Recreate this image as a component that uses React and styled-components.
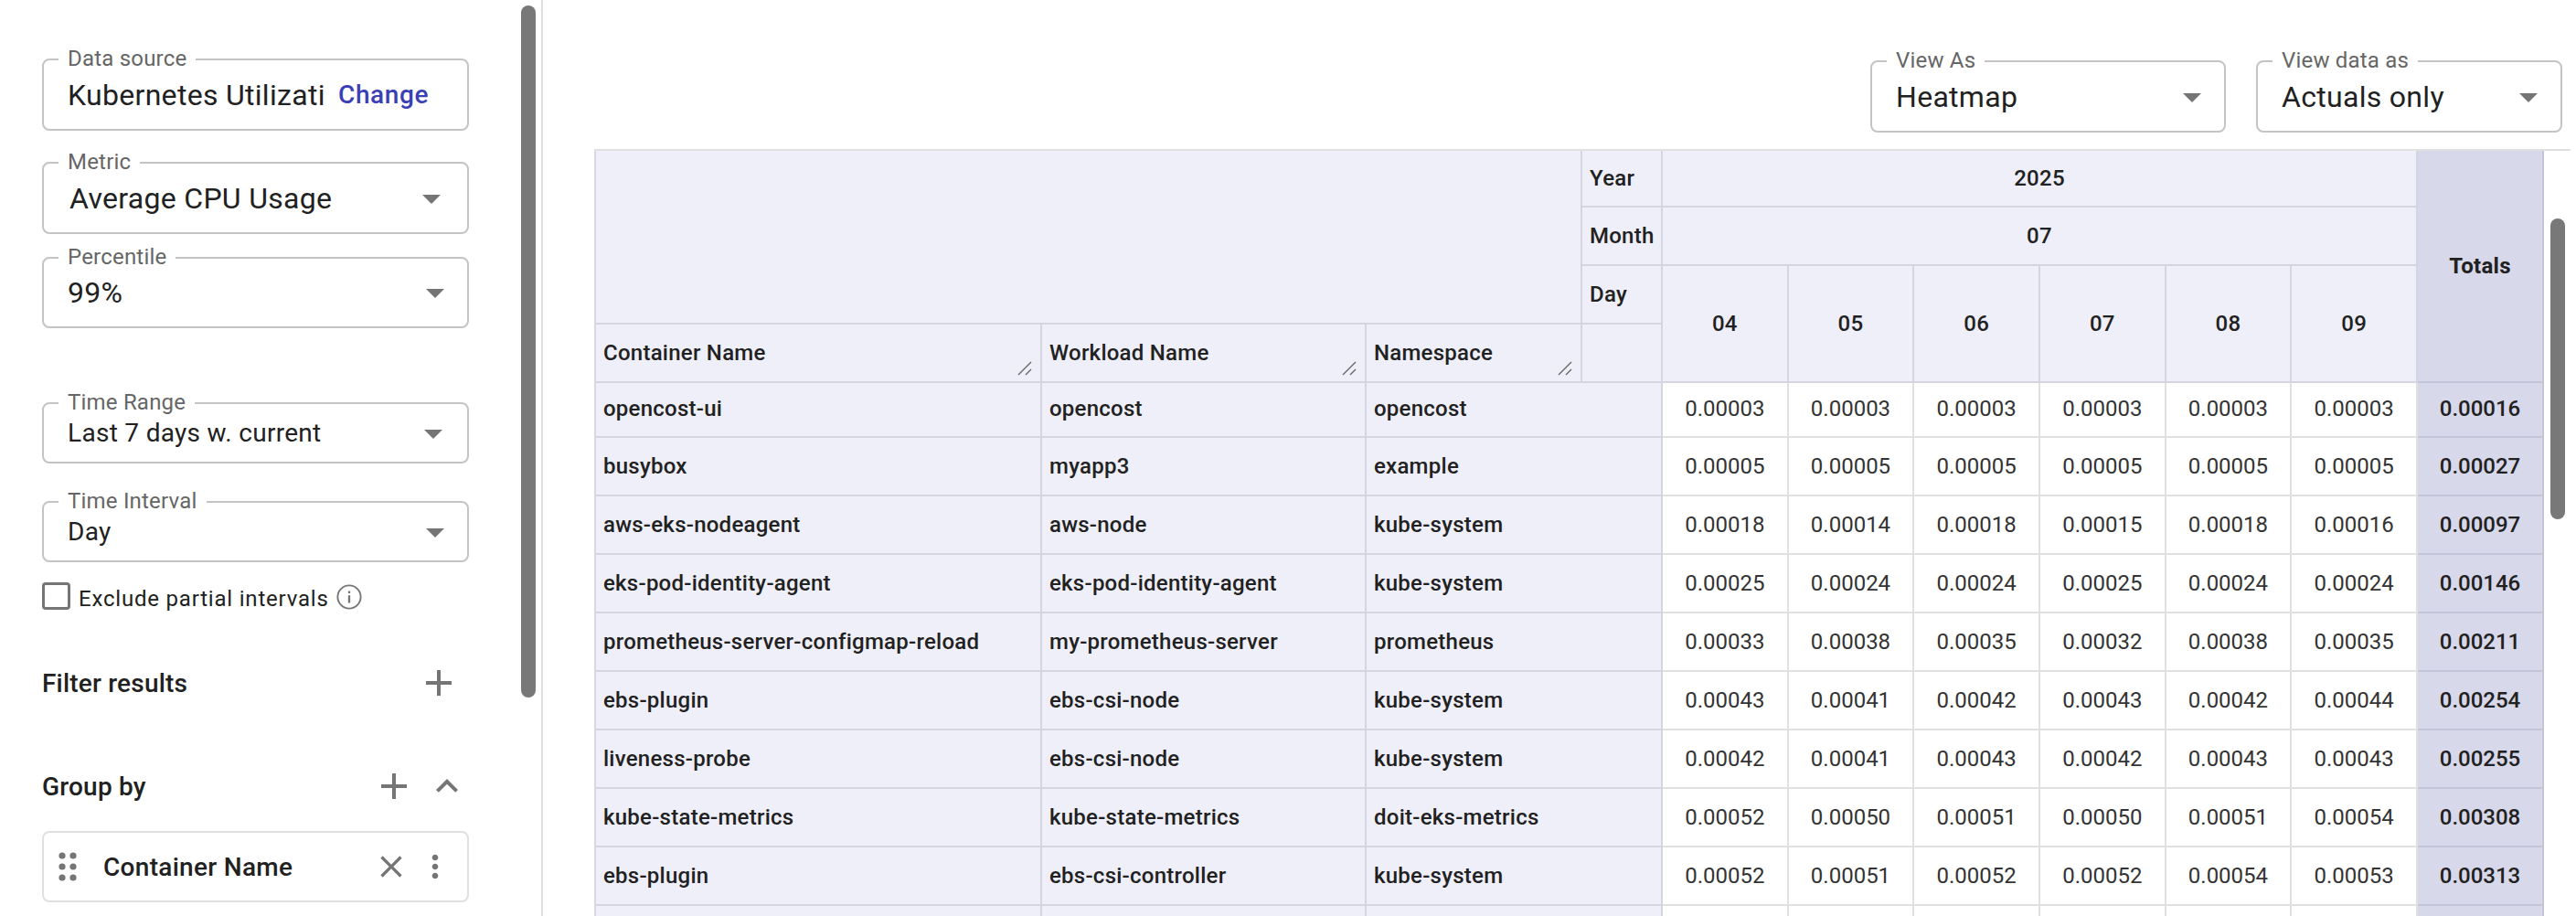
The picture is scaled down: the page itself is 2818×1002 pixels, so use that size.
import React from 'react';
import styled, { createGlobalStyle } from 'styled-components';

const GlobalStyle = createGlobalStyle`
  html, body {
    margin: 0;
    background: #fff;
    overflow: hidden;
  }
  body {
    font-family: Roboto, "Liberation Sans", sans-serif;
    color: #212121;
  }
  * {
    box-sizing: border-box;
  }
`;

const Page = styled.div`
  display: flex;
  width: 2818px;
  height: 1002px;
  overflow: hidden;
`;

const Sidebar = styled.aside`
  position: relative;
  flex: none;
  width: 594px;
  height: 100%;
  padding: 64px 0 0 46px;
  border-right: 2px solid #e0e0e0;
`;

const Thumb = styled.div`
  position: absolute;
  width: 16px;
  border-radius: 8px;
  background: #787878;
  left: ${p => p.$left}px;
  top: ${p => p.$top}px;
  height: ${p => p.$height}px;
`;

const FieldBox = styled.div`
  position: relative;
  display: flex;
  align-items: center;
  justify-content: space-between;
  width: ${p => p.$width}px;
  height: ${p => p.$height}px;
  margin-top: ${p => p.$mt || 0}px;
  padding: 0 ${p => p.$pr}px 0 ${p => p.$pl}px;
  border: 2px solid #c4c4c4;
  border-radius: 8px;
  background: #fff;
`;

const FieldLabel = styled.span`
  position: absolute;
  left: 16px;
  top: -16px;
  padding: 0 10px;
  background: #fff;
  font-size: 24px;
  line-height: 28px;
  letter-spacing: 0.2px;
  color: #666;
`;

const FieldValue = styled.span`
  font-size: ${p => p.$size}px;
  letter-spacing: 0.3px;
  color: #212121;
  white-space: nowrap;
  overflow: hidden;
`;

const ChangeLink = styled.a`
  font-size: 28px;
  font-weight: 500;
  letter-spacing: 0.6px;
  color: #3b3fb6;
  white-space: nowrap;
`;

const CheckRow = styled.div`
  display: flex;
  align-items: center;
  height: 30px;
  margin-top: 22px;
`;

const CheckBox = styled.span`
  flex: none;
  width: 31px;
  height: 30px;
  border: 3px solid #757575;
  border-radius: 4px;
`;

const CheckLabel = styled.span`
  margin: 6px 8px 0 9px;
  font-size: 24px;
  letter-spacing: 0.8px;
  color: #212121;
`;

const SectionRow = styled.div`
  display: flex;
  align-items: center;
  width: 467px;
  height: 48px;
  margin-top: ${p => p.$mt}px;
  padding-right: ${p => p.$pr}px;
`;

const SectionTitle = styled.span`
  flex: 1;
  font-size: 28px;
  font-weight: 500;
  letter-spacing: 0.2px;
  color: #212121;
`;

const Icon = styled.svg`
  flex: none;
  display: block;
  fill: #757575;
  margin-left: ${p => p.$ml || 0}px;
  margin-top: ${p => p.$mt || 0}px;
`;

const GroupCard = styled.div`
  display: flex;
  align-items: center;
  width: 467px;
  height: 78px;
  margin-top: 25px;
  padding: 0 15px 0 14px;
  border: 2px solid #e0e0e0;
  border-radius: 8px;
`;

const CardName = styled.span`
  flex: 1;
  margin-left: 27px;
  font-size: 28px;
  font-weight: 500;
  letter-spacing: 0.3px;
  color: #212121;
`;

const Main = styled.main`
  position: relative;
  flex: 1;
  min-width: 0;
  padding-left: 56px;
`;

const Toolbar = styled.div`
  display: flex;
  justify-content: flex-end;
  gap: 33px;
  height: 163px;
  padding: 66px 15px 0 0;
`;

const TableWrap = styled.div`
  width: 2162px;
  border-top: 2px solid #e0e0e0;
`;

const Table = styled.table`
  table-layout: fixed;
  width: 2133px;
  border-collapse: separate;
  border-spacing: 0;
  border-left: 2px solid #d8d8e4;
  font-size: 24px;
  letter-spacing: 0.25px;
`;

const HeadCell = styled.th`
  position: relative;
  padding: 0 8px;
  background: #efeff9;
  border-right: 2px solid #d5d5e2;
  border-bottom: 2px solid #d5d5e2;
  font-weight: 500;
  text-align: ${p => p.$align || 'left'};
  color: #212121;
`;

const TotalsHead = styled(HeadCell)`
  background: #d7d8ea;
  border-right-color: #c4c5da;
  border-bottom-color: #c4c5da;
  font-weight: 700;
`;

const ResizeMark = styled.svg`
  position: absolute;
  right: 9px;
  bottom: 6px;
  stroke: #666;
  stroke-width: 1.4;
`;

const HeadRow = styled.tr`
  height: ${p => p.$height}px;
`;

const DataRow = styled.tr`
  height: 64px;
  &:first-child {
    height: 60px;
  }
  &:first-child td {
    padding-bottom: 3px;
  }
`;

const LabelCell = styled.td`
  padding: 0 8px;
  background: #efeff9;
  border-right: 2px solid #d5d5e2;
  border-bottom: 2px solid #d5d5e2;
  font-weight: 500;
  white-space: nowrap;
`;

const ValueCell = styled.td`
  padding: 0;
  background: #fff;
  border-right: 2px solid #e0e0e0;
  border-bottom: 2px solid #e0e0e0;
  text-align: center;
  letter-spacing: 0;
  color: #333;
`;

const TotalCell = styled(ValueCell)`
  background: #d7d8ea;
  border-right-color: #c4c5da;
  border-bottom-color: #c4c5da;
  font-weight: 500;
  color: #212121;
`;

const ArrowDrop = () => (
  <Icon width="48" height="48" viewBox="0 0 24 24">
    <path d="m7 10 5 5 5-5z" />
  </Icon>
);

const Plus = ({ ml }) => (
  <Icon $ml={ml} width="48" height="48" viewBox="0 0 24 24">
    <path d="M19 13h-6v6h-2v-6H5v-2h6V5h2v6h6v2z" />
  </Icon>
);

const Field = ({ label, value, size = 32, width = 467, height = 78, mt, pl = 26, pr = 11, children }) => (
  <FieldBox $width={width} $height={height} $mt={mt} $pl={pl} $pr={pr}>
    <FieldLabel>{label}</FieldLabel>
    <FieldValue $size={size}>{value}</FieldValue>
    {children || <ArrowDrop />}
  </FieldBox>
);

const Resize = () => (
  <ResizeMark width="16" height="16" viewBox="0 0 16 16">
    <path d="M1 15 15 1M9 15l6-6" />
  </ResizeMark>
);

const days = ['04', '05', '06', '07', '08', '09'];

const rows = [
  ['opencost-ui', 'opencost', 'opencost', [3, 3, 3, 3, 3, 3], 16],
  ['busybox', 'myapp3', 'example', [5, 5, 5, 5, 5, 5], 27],
  ['aws-eks-nodeagent', 'aws-node', 'kube-system', [18, 14, 18, 15, 18, 16], 97],
  ['eks-pod-identity-agent', 'eks-pod-identity-agent', 'kube-system', [25, 24, 24, 25, 24, 24], 146],
  ['prometheus-server-configmap-reload', 'my-prometheus-server', 'prometheus', [33, 38, 35, 32, 38, 35], 211],
  ['ebs-plugin', 'ebs-csi-node', 'kube-system', [43, 41, 42, 43, 42, 44], 254],
  ['liveness-probe', 'ebs-csi-node', 'kube-system', [42, 41, 43, 42, 43, 43], 255],
  ['kube-state-metrics', 'kube-state-metrics', 'doit-eks-metrics', [52, 50, 51, 50, 51, 54], 308],
  ['ebs-plugin', 'ebs-csi-controller', 'kube-system', [52, 51, 52, 52, 54, 53], 313],
];

const fmt = n => (n / 100000).toFixed(5);

const App = () => (
  <Page>
    <GlobalStyle />
    <Sidebar>
      <Field label="Data source" value="Kubernetes Utilizati" height={79} pr={42}>
        <ChangeLink>Change</ChangeLink>
      </Field>
      <Field label="Metric" value="Average CPU Usage" height={79} mt={34} pl={28} pr={15} />
      <Field label="Percentile" value="99%" mt={25} />
      <Field label="Time Range" value="Last 7 days w. current" size={28} height={67} mt={81} pr={13} />
      <Field label="Time Interval" value="Day" size={28} height={67} mt={41} />
      <CheckRow>
        <CheckBox />
        <CheckLabel>Exclude partial intervals</CheckLabel>
        <Icon $mt={2} width="28" height="28" viewBox="0 0 24 24">
          <circle cx="12" cy="12" r="10.8" fill="none" stroke="#757575" strokeWidth="1.6" />
          <path d="M11 10.5h2v7h-2zM11 6.5h2v2h-2z" />
        </Icon>
      </CheckRow>
      <SectionRow $mt={56} $pr={9}>
        <SectionTitle>Filter results</SectionTitle>
        <Plus />
      </SectionRow>
      <SectionRow $mt={65} $pr={0}>
        <SectionTitle>Group by</SectionTitle>
        <Plus />
        <Icon $ml={10} width="48" height="48" viewBox="0 0 24 24">
          <path d="M12 8l-6 6 1.41 1.41L12 10.83l4.59 4.58L18 14z" />
        </Icon>
      </SectionRow>
      <GroupCard>
        <Icon width="24" height="36" viewBox="0 0 24 36">
          <circle cx="6" cy="6" r="3.6" />
          <circle cx="18" cy="6" r="3.6" />
          <circle cx="6" cy="18" r="3.6" />
          <circle cx="18" cy="18" r="3.6" />
          <circle cx="6" cy="30" r="3.6" />
          <circle cx="18" cy="30" r="3.6" />
        </Icon>
        <CardName>Container Name</CardName>
        <Icon width="40" height="40" viewBox="0 0 24 24">
          <path d="M19 6.41 17.59 5 12 10.59 6.41 5 5 6.41 10.59 12 5 17.59 6.41 19 12 13.41 17.59 19 19 17.59 13.41 12z" />
        </Icon>
        <Icon $ml={8} width="40" height="40" viewBox="0 0 24 24">
          <path d="M12 8c1.1 0 2-.9 2-2s-.9-2-2-2-2 .9-2 2 .9 2 2 2zm0 2c-1.1 0-2 .9-2 2s.9 2 2 2 2-.9 2-2-.9-2-2-2zm0 6c-1.1 0-2 .9-2 2s.9 2 2 2 2-.9 2-2-.9-2-2-2z" />
        </Icon>
      </GroupCard>
      <Thumb $left={570} $top={6} $height={757} />
    </Sidebar>
    <Main>
      <Toolbar>
        <Field label="View As" value="Heatmap" width={389} height={79} />
        <Field label="View data as" value="Actuals only" width={335} height={79} />
      </Toolbar>
      <TableWrap>
        <Table>
          <colgroup>
            <col width="488" />
            <col width="355" />
            <col width="236" />
            <col width="88" />
            {days.map(d => (
              <col key={d} width="137.67" />
            ))}
            <col width="138" />
          </colgroup>
          <thead>
            <HeadRow $height={62}>
              <HeadCell colSpan={3} rowSpan={3} />
              <HeadCell>Year</HeadCell>
              <HeadCell colSpan={6} $align="center">2025</HeadCell>
              <TotalsHead rowSpan={4} $align="center">Totals</TotalsHead>
            </HeadRow>
            <HeadRow $height={64}>
              <HeadCell>Month</HeadCell>
              <HeadCell colSpan={6} $align="center">07</HeadCell>
            </HeadRow>
            <HeadRow $height={64}>
              <HeadCell>Day</HeadCell>
              {days.map(d => (
                <HeadCell key={d} rowSpan={2} $align="center">{d}</HeadCell>
              ))}
            </HeadRow>
            <HeadRow $height={64}>
              <HeadCell>Container Name<Resize /></HeadCell>
              <HeadCell>Workload Name<Resize /></HeadCell>
              <HeadCell>Namespace<Resize /></HeadCell>
              <HeadCell />
            </HeadRow>
          </thead>
          <tbody>
            {rows.map(([container, workload, namespace, values, total], i) => (
              <DataRow key={i}>
                <LabelCell>{container}</LabelCell>
                <LabelCell>{workload}</LabelCell>
                <LabelCell colSpan={2}>{namespace}</LabelCell>
                {values.map((v, j) => (
                  <ValueCell key={j}>{fmt(v)}</ValueCell>
                ))}
                <TotalCell>{fmt(total)}</TotalCell>
              </DataRow>
            ))}
            <DataRow>
              <LabelCell />
              <LabelCell />
              <LabelCell colSpan={2} />
              {days.map(d => (
                <ValueCell key={d} />
              ))}
              <TotalCell />
            </DataRow>
          </tbody>
        </Table>
      </TableWrap>
      <Thumb $left={2196} $top={239} $height={329} />
    </Main>
  </Page>
);

export default App;
